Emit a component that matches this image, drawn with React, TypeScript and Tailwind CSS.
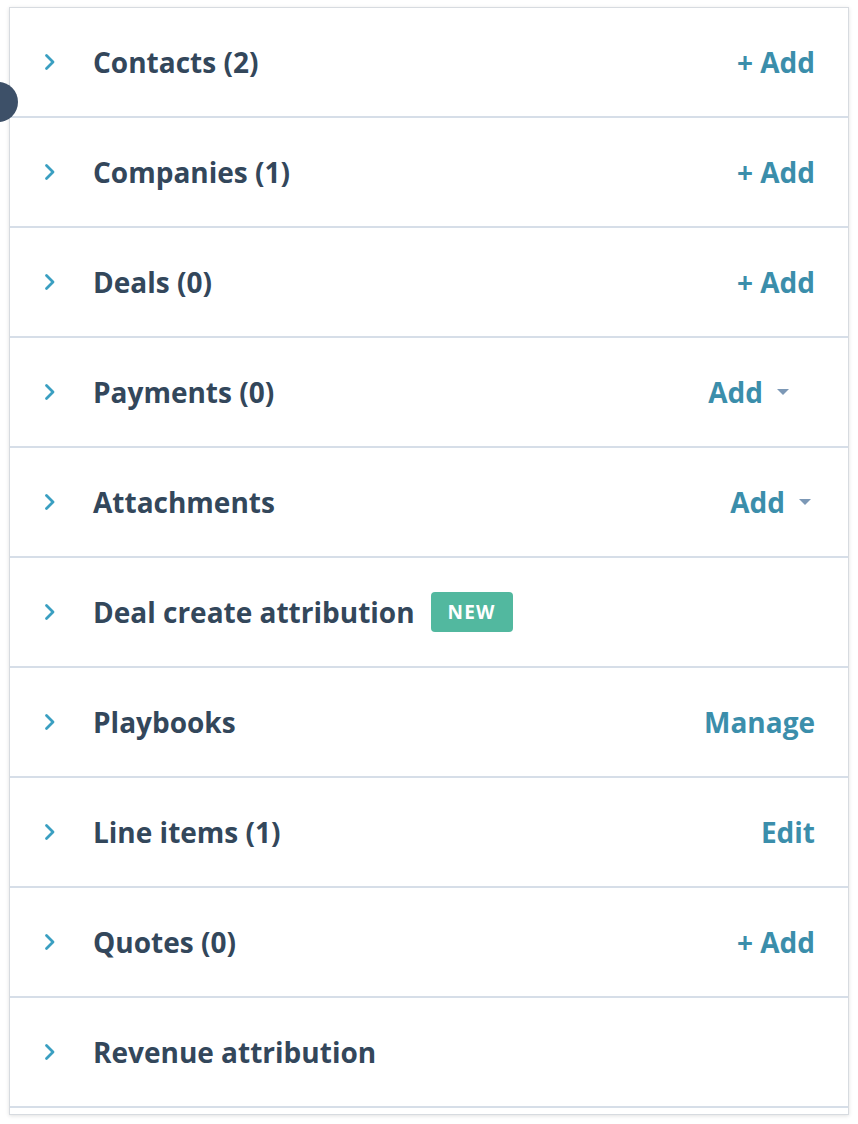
import React from 'react';

type Action =
  | { kind: 'add' }
  | { kind: 'dropdown'; pad: string }
  | { kind: 'text'; label: string }
  | { kind: 'none' };

const ROWS: { title: string; badge?: string; action: Action }[] = [
  { title: 'Contacts (2)', action: { kind: 'add' } },
  { title: 'Companies (1)', action: { kind: 'add' } },
  { title: 'Deals (0)', action: { kind: 'add' } },
  { title: 'Payments (0)', action: { kind: 'dropdown', pad: 'pr-[58px]' } },
  { title: 'Attachments', action: { kind: 'dropdown', pad: 'pr-[36px]' } },
  { title: 'Deal create attribution', badge: 'NEW', action: { kind: 'none' } },
  { title: 'Playbooks', action: { kind: 'text', label: 'Manage' } },
  { title: 'Line items (1)', action: { kind: 'text', label: 'Edit' } },
  { title: 'Quotes (0)', action: { kind: 'add' } },
  { title: 'Revenue attribution', action: { kind: 'none' } },
];

const Chevron = () => (
  <svg width="14" height="20" viewBox="0 0 14 20" fill="none" className="shrink-0">
    <path d="M3.5 3.5 L10 10 L3.5 16.5" stroke="#3a9fc1" strokeWidth="2.8" strokeLinecap="round" strokeLinejoin="round" />
  </svg>
);

const Caret = () => (
  <svg width="14" height="8" viewBox="0 0 14 8" className="shrink-0">
    <path d="M1 1 L13 1 L7 7 Z" fill="#7c98b6" />
  </svg>
);

const RowAction: React.FC<{ action: Action }> = ({ action }) => {
  if (action.kind === 'none') return null;
  if (action.kind === 'add')
    return (
      <button className="pr-[33px] text-[28px] font-bold text-[#3b8eab]">+ Add</button>
    );
  if (action.kind === 'dropdown')
    return (
      <button className={`flex items-center gap-[13px] ${action.pad} text-[28px] font-bold text-[#3b8eab]`}>
        Add
        <Caret />
      </button>
    );
  return (
    <button className="pr-[33px] text-[28px] font-bold text-[#3b8eab]">{action.label}</button>
  );
};

export default function App() {
  return (
    <div className="relative min-h-[1124px] w-[858px] bg-white pt-[7px] pl-[9px] font-['Open_Sans',sans-serif] overflow-hidden">
      <div className="w-[840px] border border-[#d7dbe0] bg-white shadow-[0_1px_4px_rgba(0,0,0,0.12)]">
        {ROWS.map((row) => (
          <div
            key={row.title}
            className="flex h-[110px] items-center justify-between border-b-2 border-[#d6dee8]"
          >
            <div className="flex items-center">
              <div className="w-[83px] pl-[33px]">
                <Chevron />
              </div>
              <span className="text-[28px] font-bold leading-none text-[#33475b]">{row.title}</span>
              {row.badge && (
                <span className="ml-[16px] rounded-[4px] bg-[#52b89f] px-[17px] py-[10px] text-[19px] font-bold leading-[20px] tracking-[1.2px] text-white">
                  {row.badge}
                </span>
              )}
            </div>
            <RowAction action={row.action} />
          </div>
        ))}
        <div className="h-[6px]" />
      </div>
      <div className="absolute left-[-22px] top-[82px] h-[40px] w-[40px] rounded-full bg-[#3d5068]" />
    </div>
  );
}
